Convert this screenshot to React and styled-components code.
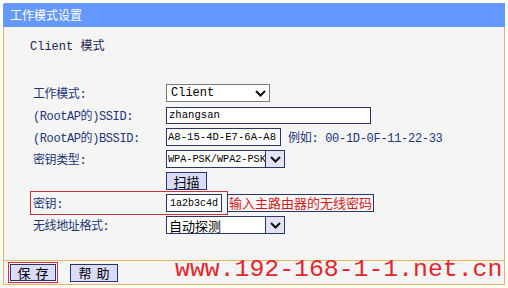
import React from 'react';
import styled, { createGlobalStyle } from 'styled-components';

const GlobalStyle = createGlobalStyle`
  html, body {
    margin: 0;
    padding: 0;
    background: #fff;
  }
  body {
    font-family: "Liberation Mono", "Noto Sans CJK SC", monospace;
  }
`;

const Page = styled.div`
  position: relative;
  width: 508px;
  height: 288px;
  padding: 3px 3px 0 3px;
  box-sizing: border-box;
  overflow: hidden;
`;

const TitleBar = styled.div`
  height: 24px;
  background: #6699ff;
  color: #fff;
  font-family: "Noto Sans CJK SC", sans-serif;
  font-size: 12px;
  line-height: 24px;
  padding-left: 7px;
  border-radius: 2px 0 0 0;
`;

const Body = styled.div`
  height: 233px;
  box-sizing: border-box;
  background: #f5f5f5;
  border-left: 1px solid #eab36a;
  border-right: 1px solid #eab36a;
  padding: 12px 0 0 29px;
`;

const Heading = styled.div`
  height: 16px;
  line-height: 16px;
  font-size: 12px;
  color: #1c2450;
  margin: 0 0 27px -3px;
`;

const Row = styled.div`
  display: flex;
  align-items: center;
  height: 22px;
`;

const Label = styled.div`
  width: 133px;
  flex: none;
  font-size: 12px;
  letter-spacing: -0.4px;
  color: #22367a;
  white-space: nowrap;
`;

const Field = styled.div`
  height: ${({ h }) => h || 18}px;
  width: ${({ w }) => w}px;
  flex: none;
  box-sizing: border-box;
  background: #fff;
  border: 1px solid ${({ grey }) => (grey ? '#7a7a7a' : '#2a3568')};
  display: flex;
  align-items: center;
  padding-left: ${({ pl }) => pl ?? 2}px;
  font-size: ${({ fs }) => fs || 10.6}px;
  font-family: ${({ cjk }) => (cjk ? '"Noto Sans CJK SC", sans-serif' : '"Liberation Mono", monospace')};
  color: #000;
  white-space: nowrap;
  overflow: hidden;
`;

const FieldText = styled.span`
  flex: 1;
  overflow: hidden;
`;

const ArrowBox = styled.div`
  width: 18px;
  height: 100%;
  flex: none;
  display: flex;
  align-items: center;
  justify-content: center;
  background: ${({ plain }) => (plain ? '#fff' : '#e2e4f6')};
  border-left: ${({ plain }) => (plain ? 'none' : '1px solid #2a3568')};
`;

const Note = styled.span`
  margin-left: 7px;
  font-size: 12px;
  color: #22367a;
  letter-spacing: -0.3px;
`;

const Button = styled.button`
  height: ${({ h }) => h || 18}px;
  width: ${({ w }) => w}px;
  padding: 0;
  box-sizing: border-box;
  background: #dadcfa;
  border: 1px solid #2a3568;
  font-family: "Noto Sans CJK SC", sans-serif;
  font-size: 13px;
  line-height: 1;
  color: #000;
  letter-spacing: ${({ spaced }) => (spaced ? '5px' : '0')};
  text-indent: ${({ spaced }) => (spaced ? '5px' : '0')};
`;

const KeyBox = styled.div`
  display: flex;
  align-items: center;
  height: 24px;
  box-sizing: border-box;
  border: 1px solid #d0303a;
  margin: 0 0 0 -3px;
  padding: 0 5px 0 2px;
`;

const Hint = styled.div`
  height: 18px;
  box-sizing: border-box;
  border: 1px solid #2a3568;
  margin-left: -1px;
  padding: 0 1px;
  font-family: "Noto Sans CJK SC", sans-serif;
  font-size: 13px;
  line-height: 16px;
  color: #d01c1c;
  white-space: nowrap;
`;

const Footer = styled.div`
  height: 25px;
  box-sizing: border-box;
  background: #f5f5f5;
  border: 1px solid #eab36a;
  display: flex;
  align-items: center;
  gap: 12px;
  padding-left: 4px;
`;

const FocusRing = styled.div`
  border: 1px solid #d0303a;
  padding: 1px;
  display: flex;
`;

const Watermark = styled.div`
  position: absolute;
  left: 175px;
  top: 254px;
  font-family: "Liberation Mono", monospace;
  font-size: 24.8px;
  line-height: 30px;
  color: #e3262b;
  white-space: nowrap;
  pointer-events: none;
`;

const Chevron = () => (
  <svg width="11" height="7" viewBox="0 0 11 7">
    <path d="M1 1 L5.5 5.5 L10 1" fill="none" stroke="#111" strokeWidth="2" />
  </svg>
);

export default function App() {
  return (
    <Page>
      <GlobalStyle />
      <TitleBar>工作模式设置</TitleBar>
      <Body>
        <Heading>Client 模式</Heading>
        <Row>
          <Label>工作模式:</Label>
          <Field w={104} grey fs={12} pl={4}>
            <FieldText>Client</FieldText>
            <ArrowBox plain>
              <Chevron />
            </ArrowBox>
          </Field>
        </Row>
        <Row>
          <Label>(RootAP的)SSID:</Label>
          <Field w={205} h={17}>zhangsan</Field>
        </Row>
        <Row>
          <Label>(RootAP的)BSSID:</Label>
          <Field w={115} pl={1}>A8-15-4D-E7-6A-A8</Field>
          <Note>例如: 00-1D-0F-11-22-33</Note>
        </Row>
        <Row>
          <Label>密钥类型:</Label>
          <Field w={119} pl={1} fs={10.2}>
            <FieldText>WPA-PSK/WPA2-PSK</FieldText>
            <ArrowBox>
              <Chevron />
            </ArrowBox>
          </Field>
        </Row>
        <Row>
          <Label />
          <Button w={41}>扫描</Button>
        </Row>
        <Row>
          <KeyBox>
            <Label>密钥:</Label>
            <Field w={56} pl={3} fs={10}>1a2b3c4d</Field>
          </KeyBox>
          <Hint>输入主路由器的无线密码</Hint>
        </Row>
        <Row>
          <Label>无线地址格式:</Label>
          <Field w={119} cjk fs={13} pl={2}>
            <FieldText>自动探测</FieldText>
            <ArrowBox>
              <Chevron />
            </ArrowBox>
          </Field>
        </Row>
      </Body>
      <Footer>
        <FocusRing>
          <Button w={46} h={17} spaced>保存</Button>
        </FocusRing>
        <Button w={48} h={18} spaced>帮助</Button>
      </Footer>
      <Watermark>www.192-168-1-1.net.cn</Watermark>
    </Page>
  );
}
